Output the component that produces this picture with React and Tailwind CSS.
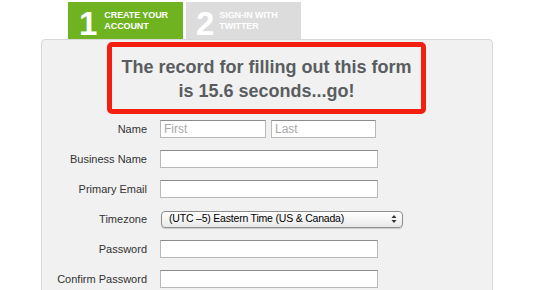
import React from "react";

const labelCls = "w-[105px] text-right text-[11px] text-[#333] pr-0";

function Input({ w, placeholder }) {
  return (
    <div
      className={`h-[18px] ${w} bg-white border border-[#b9b9b9] border-t-[#8c8c8c] flex items-center px-[3px] text-[12px] text-[#a8a8a8]`}
    >
      {placeholder}
    </div>
  );
}

function Row({ label, children }) {
  return (
    <div className="h-[30px] flex items-center">
      <div className={labelCls}>{label}</div>
      <div className="ml-[13px] flex items-center gap-[5px]">{children}</div>
    </div>
  );
}

export default function App() {
  return (
    <div
      className="w-[550px] h-[290px] bg-white overflow-hidden"
      style={{ fontFamily: '"Liberation Sans", Arial, sans-serif' }}
    >
      <div className="pl-[68px] pt-[2px] flex gap-[3px]">
        <div className="w-[115px] h-[37px] bg-[#6fb320] flex items-center text-white">
          <span className="ml-[11px] text-[33px] font-bold leading-none mt-[5px]">1</span>
          <div className="ml-[7px] text-[9px] font-bold leading-[11px] tracking-[-0.1px]">
            CREATE YOUR
            <br />
            ACCOUNT
          </div>
        </div>
        <div className="w-[115px] h-[37px] bg-[#dcdcdc] flex items-center text-white">
          <span className="ml-[10px] text-[33px] font-bold leading-none mt-[5px]">2</span>
          <div className="ml-[5px] text-[9px] font-bold leading-[11px] tracking-[-0.1px]">
            SIGN-IN WITH
            <br />
            TWITTER
          </div>
        </div>
      </div>
      <div className="ml-[41px] w-[452px] h-[260px] border border-[#d8d8d8] rounded-t-[4px] bg-[#f1f1f1]">
        <div className="ml-[65px] mt-[2px] w-[319px] h-[72px] border-[5px] border-[#f3200f] rounded-[5px] flex flex-col items-center justify-center text-[#5a5d60] font-bold text-[18px] leading-[24px] pt-[1px]">
          <div>The record for filling out this form</div>
          <div>is 15.6 seconds...go!</div>
        </div>
        <Row label="Name">
          <Input w="w-[106px]" placeholder="First" />
          <Input w="w-[105px]" placeholder="Last" />
        </Row>
        <Row label="Business Name">
          <Input w="w-[218px]" />
        </Row>
        <Row label="Primary Email">
          <Input w="w-[218px]" />
        </Row>
        <Row label="Timezone">
          <div className="ml-[1px] w-[242px] h-[17px] rounded-[4px] border border-[#8e8e8e] bg-gradient-to-b from-white to-[#e9e9e9] flex items-center pl-[7px] pr-[5px] text-[10.5px] tracking-[-0.2px] text-black shadow-[0_1px_1px_rgba(0,0,0,0.15)]">
            <span className="flex-1">(UTC –5) Eastern Time (US &amp; Canada)</span>
            <svg width="6" height="10" viewBox="0 0 6 10">
              <path d="M3 1 L5.5 4 L0.5 4 Z" fill="#333" />
              <path d="M3 9 L5.5 6 L0.5 6 Z" fill="#333" />
            </svg>
          </div>
        </Row>
        <Row label="Password">
          <Input w="w-[218px]" />
        </Row>
        <Row label="Confirm Password">
          <Input w="w-[218px]" />
        </Row>
      </div>
    </div>
  );
}
